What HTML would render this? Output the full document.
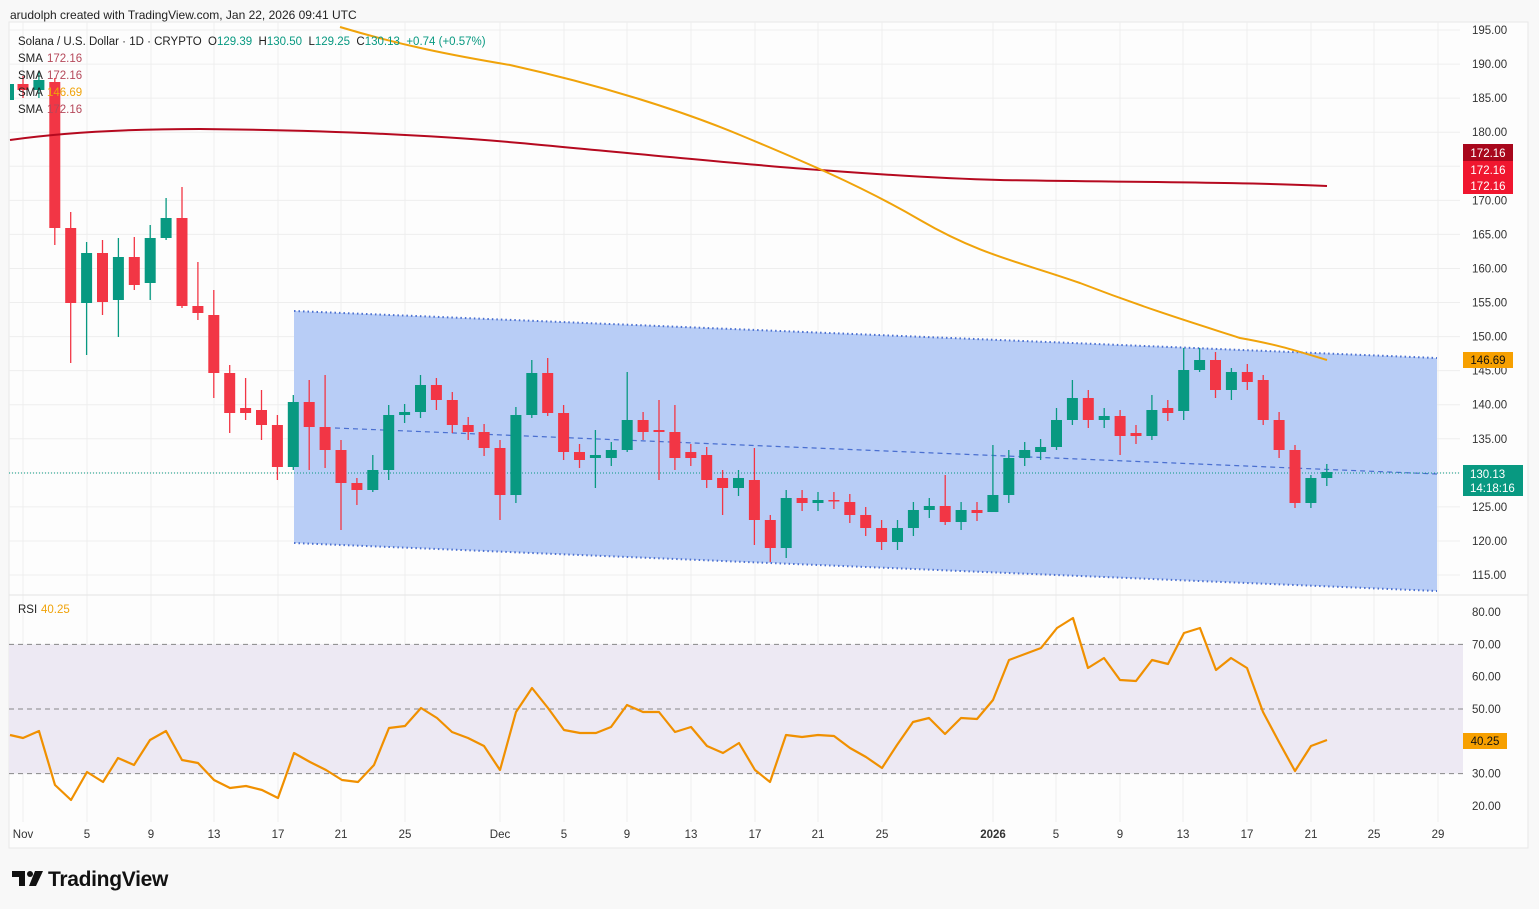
<!DOCTYPE html>
<html><head><meta charset="utf-8"><style>
html,body{margin:0;padding:0;background:#f9f9f9;width:1539px;height:909px;overflow:hidden;font-family:"Liberation Sans",sans-serif}
svg{position:absolute;left:0;top:0}
</style></head><body>
<svg id="s" width="1539" height="909" xmlns="http://www.w3.org/2000/svg" font-family="Liberation Sans, sans-serif"></svg>
<script>
const S=document.getElementById('s');let h='';
const X=i=>23+15.9*i;
h+='<rect x="0" y="0" width="1539" height="909" fill="#f8f8f8"/>';
h+='<rect x="9" y="22" width="1519" height="826" fill="#fdfdfd" stroke="#e8e8e8"/>';
h+='<text x="10" y="19" font-size="12" fill="#222">arudolph created with TradingView.com, Jan 22, 2026 09:41 UTC</text>';
const xl=[[23,'Nov'],[87,'5'],[151,'9'],[214,'13'],[278,'17'],[341,'21'],[405,'25'],[500,'Dec'],[564,'5'],[627,'9'],[691,'13'],[755,'17'],[818,'21'],[882,'25'],[993,'2026'],[1056,'5'],[1120,'9'],[1183,'13'],[1247,'17'],[1311,'21'],[1374,'25'],[1438,'29']];
xl.forEach(([x,t])=>{h+=`<line x1="${x}" y1="22" x2="${x}" y2="822" stroke="#eeeeee"/>`;h+=`<text x="${x}" y="838" font-size="11.5" text-anchor="middle" fill="#333" ${t=='2026'?'font-weight="bold"':''}>${t}</text>`});
const Y=p=>30+(195-p)*6.8125;
for(let p=195;p>=115;p-=5){const y=Y(p);h+=`<line x1="9" y1="${y}" x2="1460" y2="${y}" stroke="#eeeeee"/>`;h+=`<text x="1472" y="${y+4}" font-size="11.5" fill="#333">${p.toFixed(2)}</text>`;}
h+='<line x1="9" y1="595" x2="1528" y2="595" stroke="#e4e4e4"/>';
h+='<polygon points="294,311 1437,358 1437,591 294,543" fill="#b8cdf6"/>';
h+='<line x1="294" y1="311" x2="1437" y2="358" stroke="#4a6fd0" stroke-width="2" stroke-dasharray="1.5 3"/>';
h+='<line x1="294" y1="543" x2="1437" y2="591" stroke="#4a6fd0" stroke-width="2" stroke-dasharray="1.5 3"/>';
h+='<line x1="335" y1="428" x2="1437" y2="474" stroke="#4a6fd0" stroke-width="1.2" stroke-dasharray="5 4"/>';
h+='<line x1="9" y1="473" x2="1460" y2="473" stroke="#089981" stroke-dasharray="1 2"/>';
const C=[[84,90],[90,80],[82,228],[228,303],[303,253],[253,302],[300,257],[257,285],[283,238],[238,218],[218,306],[306,313],[315,373],[373,413],[408,413],[410,425],[425,467],[467,402],[402,427],[427,450],[450,483],[483,490],[490,470],[470,415],[415,412],[412,385],[385,400],[400,425],[425,432],[432,448],[448,495],[495,415],[415,373],[373,413],[413,452],[452,460],[458,455],[458,450],[450,420],[420,432],[430,432],[432,458],[452,458],[455,480],[478,488],[488,478],[480,520],[520,548],[548,498],[498,503],[503,500],[500,501],[502,515],[515,528],[528,542],[542,528],[528,510],[510,506],[506,522],[522,510],[510,513],[512,495],[495,458],[458,450],[452,447],[447,420],[420,398],[398,420],[420,416],[416,436],[433,436],[436,410],[408,413],[411,370],[370,360],[360,390],[390,372],[372,382],[380,420],[420,450],[450,503],[503,478],[478,472]];
const W={2:[78,245],3:[212,363],4:[242,355],5:[240,315],6:[238,337],7:[237,290],8:[225,300],9:[198,240],10:[187,308],11:[262,320],12:[290,398],13:[365,433],14:[378,420],15:[390,440],16:[415,480],17:[395,470],18:[380,470],19:[375,468],20:[440,530],21:[478,505],22:[455,492],23:[405,480],25:[375,418],26:[378,410],30:[440,520],32:[360,418],33:[358,416],36:[430,488],38:[372,452],40:[400,480],41:[405,470],44:[470,515],46:[448,545],47:[515,562],48:[490,558],58:[475,525],61:[445,508],65:[408,450],66:[380,425],69:[410,455],71:[395,440],73:[348,420],74:[348,372],76:[368,400],78:[375,425],80:[445,508],81:[475,508]};
C.forEach(([o,c],i)=>{const x=X(i);const up=c<o;const col=up?'#089981':'#f23645';const t=Math.min(o,c),b=Math.max(o,c);const w=W[i]||[t-8,b+8];
h+=`<line x1="${x}" y1="${w[0]}" x2="${x}" y2="${w[1]}" stroke="${col}" stroke-width="1.3"/>`;
h+=`<rect x="${x-5.5}" y="${t}" width="11" height="${Math.max(b-t,1.5)}" fill="${col}"/>`;});
h+='<rect x="10" y="84" width="4" height="16" fill="#089981"/>';
h+='<path d="M10,140 C60,133 120,129 200,129 C300,130 420,134 520,143 C650,155 760,166 820,170 C900,176 960,179 1000,180 C1100,182 1250,182 1327,186" fill="none" stroke="#b5091f" stroke-width="2"/>';
h+='<path d="M340,27 C400,45 450,55 510,65 C600,85 680,110 740,135 C800,160 860,185 920,220 C980,255 1020,262 1080,283 C1150,310 1200,325 1240,338 C1280,345 1300,352 1327,360" fill="none" stroke="#f0a30a" stroke-width="2"/>';
h+='<text x="18" y="45" font-size="11.5" fill="#222" style="white-space:pre">Solana / U.S. Dollar · 1D · CRYPTO  O<tspan fill="#089981">129.39</tspan>  H<tspan fill="#089981">130.50</tspan>  L<tspan fill="#089981">129.25</tspan>  C<tspan fill="#089981">130.13</tspan>  <tspan fill="#089981">+0.74 (+0.57%)</tspan></text>';
[['172.16','#b5485a',62],['172.16','#b5485a',79],['146.69','#f0a30a',96],['172.16','#b5485a',113]].forEach(([v,c,y])=>{h+=`<text x="18" y="${y}" font-size="11.5" fill="#222">SMA</text><text x="47" y="${y}" font-size="11.5" fill="${c}">${v}</text>`});
h+='<rect x="1463" y="144" width="50" height="17" fill="#a8071c"/><rect x="1463" y="161" width="50" height="33" fill="#f0162f"/>';
[157,174,190].forEach(y=>h+=`<text x="1488" y="${y}" font-size="11.5" fill="#fff" text-anchor="middle">172.16</text>`);
h+='<rect x="1463" y="352" width="50" height="16" fill="#f7a000"/><text x="1488" y="364" font-size="11.5" fill="#111" text-anchor="middle">146.69</text>';
h+='<rect x="1463" y="465" width="60" height="31" fill="#089981"/><text x="1470" y="478" font-size="11.5" fill="#fff">130.13</text><text x="1470" y="492" font-size="11.5" fill="#fff">14:18:16</text>';
const R=v=>612+(80-v)*3.233;
h+=`<rect x="9" y="${R(70)}" width="1454" height="${R(30)-R(70)}" fill="#ede9f3"/>`;
[70,50,30].forEach(v=>h+=`<line x1="9" y1="${R(v)}" x2="1463" y2="${R(v)}" stroke="#888" stroke-dasharray="5 4"/>`);
[80,70,60,50,30,20].forEach(v=>h+=`<text x="1472" y="${R(v)+4}" font-size="11.5" fill="#333">${v.toFixed(2)}</text>`);
h+='<text x="18" y="613" font-size="11.5" fill="#222">RSI</text><text x="41" y="613" font-size="11.5" fill="#f0a30a">40.25</text>';
const rp="10,735 23,738 39,731 55,785 71,800 87,772 103,782 118,758 134,765 150,740 166,731 182,760 198,763 214,780 230,788 246,786 262,790 278,798 294,753 310,762 326,770 342,780 358,782 374,765 389,728 405,726 421,708 437,718 452,732 468,738 484,746 500,770 516,712 532,688 548,708 564,730 580,733 596,733 611,727 627,705 643,712 659,712 675,732 691,727 707,746 723,753 739,743 755,770 770,782 786,735 802,737 818,735 834,736 850,748 866,757 882,768 897,745 913,722 929,718 945,734 961,718 977,719 993,700 1009,660 1025,654 1041,648 1057,628 1073,618 1088,668 1104,658 1120,680 1136,681 1152,660 1168,664 1184,633 1200,628 1216,670 1231,658 1247,668 1263,712 1279,742 1295,771 1311,746 1327,740";
h+=`<polyline points="${rp}" fill="none" stroke="#f09000" stroke-width="2.2" stroke-linejoin="round"/>`;
h+='<rect x="1463" y="733" width="44" height="16" fill="#f7a000"/><text x="1485" y="745" font-size="11.5" fill="#111" text-anchor="middle">40.25</text>';
h+='<path d="M12,871 h13 v15 h-6 v-9 h-7z" fill="#111"/><circle cx="30" cy="874" r="3" fill="#111"/><path d="M35,871 h8 l-7,15 h-7z" fill="#111"/>';
h+='<text x="48" y="886" font-size="21" font-weight="bold" fill="#111" letter-spacing="-0.3">TradingView</text>';
S.innerHTML=h;
</script>
</body></html>
